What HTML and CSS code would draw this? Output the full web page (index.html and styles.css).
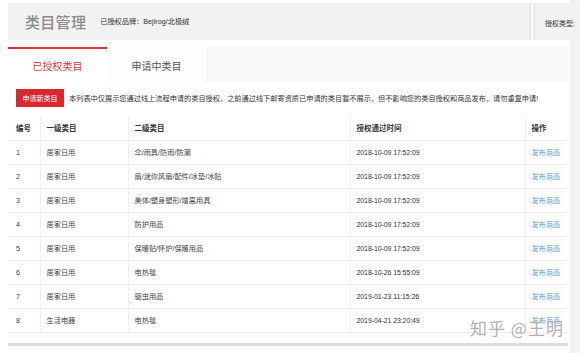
FILE: index.html
```html
<!DOCTYPE html>
<html lang="zh">
<head>
<meta charset="utf-8">
<link rel="stylesheet" href="styles.css">
</head>
<body>
<div class="page">
  <div class="header">
    <div class="header-main">
      <h1 class="title">类目管理</h1>
      <span class="brand">已授权品牌：Bejirog/北极绒</span>
    </div>
    <div class="header-side">授权类型:</div>
  </div>
  <div class="panel">
    <div class="tabs">
      <div class="tab active">已授权类目</div>
      <div class="tab">申请中类目</div>
    </div>
    <div class="content">
      <div class="notice">
        <span class="btn">申请新类目</span>
        <span class="notice-text">本列表中仅展示您通过线上流程申请的类目授权，之前通过线下邮寄资质已申请的类目暂不展示，但不影响您的类目授权和商品发布，请勿重复申请!</span>
      </div>
      <table class="grid">
        <colgroup>
          <col class="c1"><col class="c2"><col class="c3"><col class="c4"><col class="c5">
        </colgroup>
        <thead>
          <tr><th>编号</th><th>一级类目</th><th>二级类目</th><th>授权通过时间</th><th>操作</th></tr>
        </thead>
        <tbody>
          <tr><td>1</td><td>居家日用</td><td>伞/雨具/防雨/防潮</td><td class="num">2018-10-09 17:52:09</td><td><a class="link">发布商品</a></td></tr>
          <tr><td>2</td><td>居家日用</td><td>扇/迷你风扇/配件/冰垫/冰贴</td><td class="num">2018-10-09 17:52:09</td><td><a class="link">发布商品</a></td></tr>
          <tr><td>3</td><td>居家日用</td><td>美体/塑身塑形/增高用具</td><td class="num">2018-10-09 17:52:09</td><td><a class="link">发布商品</a></td></tr>
          <tr><td>4</td><td>居家日用</td><td>防护用品</td><td class="num">2018-10-09 17:52:09</td><td><a class="link">发布商品</a></td></tr>
          <tr><td>5</td><td>居家日用</td><td>保暖贴/怀炉/保暖用品</td><td class="num">2018-10-09 17:52:09</td><td><a class="link">发布商品</a></td></tr>
          <tr><td>6</td><td>居家日用</td><td>电热毯</td><td class="num">2018-10-26 15:55:09</td><td><a class="link">发布商品</a></td></tr>
          <tr><td>7</td><td>居家日用</td><td>驱虫用品</td><td class="num">2019-01-23 11:15:26</td><td><a class="link">发布商品</a></td></tr>
          <tr><td>8</td><td>生活电器</td><td>电热毯</td><td class="num">2019-04-21 23:20:49</td><td><a class="link">发布商品</a></td></tr>
        </tbody>
      </table>
    </div>
  </div>
  <div class="watermark">知乎 @王明</div>
</div>
</body>
</html>
```

FILE: styles.css
```css
* { box-sizing: border-box; }
html, body { margin: 0; padding: 0; }
body {
  width: 580px;
  height: 353px;
  overflow: hidden;
  background: #f4f4f4;
  font-family: "Liberation Sans", "Noto Sans CJK SC", sans-serif;
  color: #333;
}
.page {
  position: relative;
  height: 353px;
  padding: 3px 0 0 8px;
  background: linear-gradient(to right, #ffffff 0, #ffffff 568px, #eeeeee 572px, #f6f6f6 580px);
}
.header {
  display: flex;
  height: 37px;
  background: #f2f2f2;
  width: 572px;
}
.header-main {
  flex: 1;
  display: flex;
  align-items: center;
  padding-left: 17px;
  border-right: 1px solid #e2e2e2;
  box-shadow: 2px 0 0 #fafafa;
}
.title {
  margin: 0;
  font-size: 15px;
  font-weight: 500;
  color: #8a8a8a;
  letter-spacing: 0.3px;
  font-family: "Noto Sans CJK SC", sans-serif;
}
.brand {
  margin-left: 14px;
  font-size: 7.2px;
  color: #333;
  margin-top: -2px;
}
.header-side {
  width: 46px;
  margin-left: 3px;
  border-left: 1px solid #e6e6e6;
  padding: 15px 0 0 10px;
  font-size: 7px;
  color: #333;
  white-space: nowrap;
}
.panel {
  width: 560px;
  margin-top: 7px;
  background: #fff;
  height: 299px;
  border-bottom: 3px solid #dcdcdc;
}
.tabs {
  display: flex;
  height: 35px;
  background: #f8f8f8;
}
.tab {
  width: 99px;
  display: flex;
  align-items: center;
  justify-content: center;
  font-size: 10px;
  color: #555;
  background: #fdfdfd;
  border-top: 2px solid transparent;
  padding-bottom: 1px;
}
.tab.active {
  color: #d9363e;
  background: #fff;
  border-top-color: #d9363e;
}
.content {
  padding: 7px 0 0 0;
}
.notice {
  display: flex;
  align-items: center;
  padding-left: 8px;
  height: 18px;
}
.btn {
  display: inline-flex;
  align-items: center;
  justify-content: center;
  width: 48px;
  height: 18px;
  background: #d9282f;
  color: #fff;
  font-size: 7px;
  flex: none;
}
.notice-text {
  margin-left: 5px;
  font-size: 7.2px;
  color: #333;
  white-space: nowrap;
}
.grid {
  width: 558px;
  margin-top: 9px;
  border-collapse: collapse;
  table-layout: fixed;
  font-size: 7.2px;
}
.c1 { width: 32px; }
.c2 { width: 88px; }
.c3 { width: 222px; }
.c4 { width: 175px; }
.c5 { width: 41px; }
.grid th, .grid td {
  height: 24px;
  padding: 0 0 0 6px;
  text-align: left;
  border-bottom: 1px solid #ececec;
  border-left: 1px solid #f0f0f0;
  white-space: nowrap;
  overflow: hidden;
}
.grid th:first-child, .grid td:first-child {
  border-left: none;
  padding-left: 8px;
}
.grid th {
  font-weight: 600;
  color: #333;
  font-size: 7.5px;
}
.grid td { color: #444; }
.grid .num { font-size: 7px; letter-spacing: -0.1px; color: #333; }
.link {
  color: #5b9fd9;
  text-decoration: none;
}
.watermark {
  position: absolute;
  left: 470px;
  top: 315px;
  font-size: 17px;
  color: #b0b0b0;
  font-family: "Noto Sans CJK SC", sans-serif;
  letter-spacing: 1px;
  text-shadow: 0 0 2px #fff;
}
```
